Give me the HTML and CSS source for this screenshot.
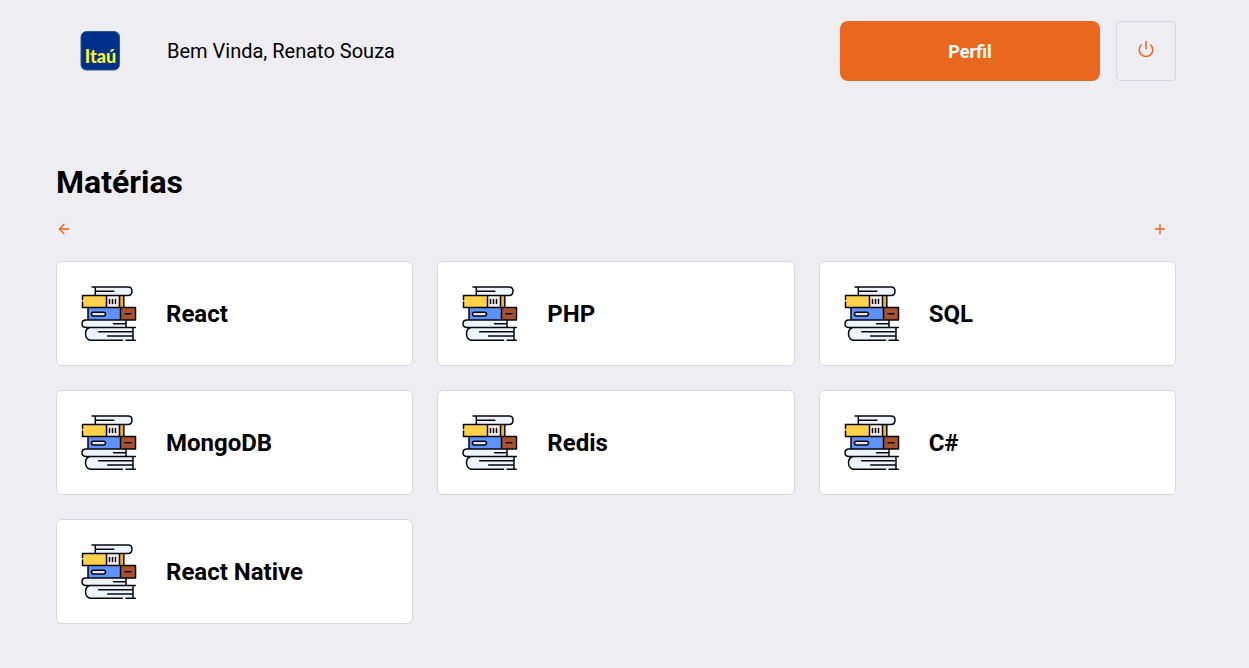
FILE: index.html
```html
<!DOCTYPE html>
<html lang="pt-BR">
<head>
<meta charset="utf-8">
<meta name="viewport" content="width=device-width, initial-scale=1">
<title>Matérias</title>
<link rel="stylesheet" href="styles.css">
</head>
<body>
<svg class="defs" aria-hidden="true">
  <symbol id="books" viewBox="0 0 56 56">
    <path fill="#eef3fc" d="M14 1h33q4 0 4 4.200t-4 4.300H14z"/>
    <path fill="#ffd24a" d="M1.500 9.500h24v12h-24z"/>
    <path fill="#f7ece9" d="M25.500 9.500h13v12h-13z"/>
    <path fill="#f3b51b" d="M38.500 9.500h4.500v12h-4.500z"/>
    <path fill="#5f92f8" d="M7 21.500h32.500V34H7z"/>
    <path fill="#a9522b" d="M39.500 21.500h15V34h-15z"/>
    <path fill="#eef3fc" d="M5 34h40v7.500H5q-4 0-4-3.700T5 34zM9 41.500h43V54H9q-4.500-1-4.500-6.200T9 41.500z"/>
    <rect x="10.500" y="26.200" width="14" height="3.700" rx="1.800" fill="#e8e2ee"/>
    <path class="ink" d="M11 1h36q4 0 4 4.200t-4 4.300M14.300 1v8.500M14.300 5.200h18.500M47 9.500H1.500v4M1.500 16v5.500H54.500V34H5q-4 0-4 3.700T5 41.500H54.300M25.500 9.500v12M38.500 9.500v12M42.800 9.500v12M28.500 13.500v4M31.500 13.500v4M34.500 13.500v4M7 21.500V34M39.500 21.500V34M44 27.800h6M45 34v7.500M32.500 37.700H45M9 41.500q-4.500 1-4.500 6.200T9 54.200h32.500M45 54.200h9.300M52 41.500v12.700M17.700 45.800H52M26.700 50H52"/>
    <rect class="ink" x="10.500" y="26.200" width="14" height="3.700" rx="1.800"/>
  </symbol>
</svg>
<div class="page">
  <header class="header">
    <svg class="logo" viewBox="0 0 40 40" role="img" aria-label="Itaú">
      <rect x="1" y=".5" width="38.500" height="38.500" rx="5.500" fill="#002f8c" stroke="#2f5597"/>
      <text x="20.500" y="32" text-anchor="middle" class="logo-text">Itaú</text>
    </svg>
    <span class="welcome">Bem Vinda, Renato Souza</span>
    <a class="profile" href="#perfil">Perfil</a>
    <button class="logout" type="button" aria-label="Sair">
      <svg class="icon-power" viewBox="0 0 24 24"><path d="M18.360 6.640a9 9 0 1 1-12.730 0M12 2v10"/></svg>
    </button>
  </header>
  <main>
    <h1 class="title">Matérias</h1>
    <nav class="actions">
      <a href="#voltar" aria-label="Voltar"><svg class="icon-action" viewBox="0 0 24 24"><path d="M19 12H5M12 19l-7-7 7-7"/></svg></a>
      <a href="#nova" aria-label="Adicionar"><svg class="icon-action" viewBox="0 0 24 24"><path d="M12 5v14M5 12h14"/></svg></a>
    </nav>
    <ul class="grid">
      <li class="card"><svg class="books"><use href="#books"/></svg><strong class="name">React</strong></li>
      <li class="card"><svg class="books"><use href="#books"/></svg><strong class="name">PHP</strong></li>
      <li class="card"><svg class="books"><use href="#books"/></svg><strong class="name">SQL</strong></li>
      <li class="card"><svg class="books"><use href="#books"/></svg><strong class="name">MongoDB</strong></li>
      <li class="card"><svg class="books"><use href="#books"/></svg><strong class="name">Redis</strong></li>
      <li class="card"><svg class="books"><use href="#books"/></svg><strong class="name">C#</strong></li>
      <li class="card"><svg class="books"><use href="#books"/></svg><strong class="name">React Native</strong></li>
    </ul>
  </main>
</div>
</body>
</html>
```
FILE: styles.css
```css
* {
  box-sizing: border-box;
  margin: 0;
  padding: 0;
}

body {
  padding: 21px 17px 32px 0;
  background: #eeedf2;
  color: #000;
  font-family: Roboto, sans-serif;
}

.defs {
  display: none;
}

.page {
  max-width: 1120px;
  margin: 0 auto;
}

.header {
  display: flex;
  align-items: center;
  gap: 16px;
  padding-left: 24px;
}

.logo {
  width: 40px;
  height: 40px;
}

.logo-text {
  fill: #fbf52e;
  font: 900 18px Lato, sans-serif;
}

.welcome {
  margin-left: 31px;
  font-size: 20px;
  line-height: 24px;
}

.profile {
  display: flex;
  align-items: center;
  justify-content: center;
  width: 260px;
  height: 60px;
  margin-left: auto;
  border-radius: 8px;
  background: #e9671e;
  color: #fff;
  font-size: 18px;
  font-weight: 700;
  text-decoration: none;
}

.logout {
  display: flex;
  align-items: center;
  justify-content: center;
  width: 60px;
  height: 60px;
  padding-bottom: 4px;
  border: 1px solid #d7d7e0;
  border-radius: 4px;
  background: transparent;
}

.icon-power,
.icon-action {
  display: block;
  width: 18px;
  height: 18px;
  fill: none;
  stroke: #e9671e;
  stroke-width: 2;
  stroke-linecap: round;
  stroke-linejoin: round;
}

.icon-action {
  width: 16px;
  height: 16px;
}

.title {
  margin-top: 80px;
  font-size: 32px;
  line-height: 42px;
}

.actions {
  display: flex;
  justify-content: space-between;
  margin-top: 18px;
  padding-right: 8px;
}

.grid {
  display: grid;
  grid-template-columns: repeat(3, 1fr);
  gap: 24px;
  margin-top: 24px;
  list-style: none;
}

.card {
  display: flex;
  align-items: center;
  gap: 29px;
  min-height: 105px;
  padding: 23px 24px;
  border: 1px solid #d7d7e0;
  border-radius: 6px;
  background: #fff;
}

.books {
  flex: none;
  width: 56px;
  height: 56px;
}

.ink {
  fill: none;
  stroke: #05070c;
  stroke-width: 1.500;
  stroke-linecap: round;
  stroke-linejoin: round;
}

.name {
  font-size: 24px;
  line-height: 30px;
}
```
